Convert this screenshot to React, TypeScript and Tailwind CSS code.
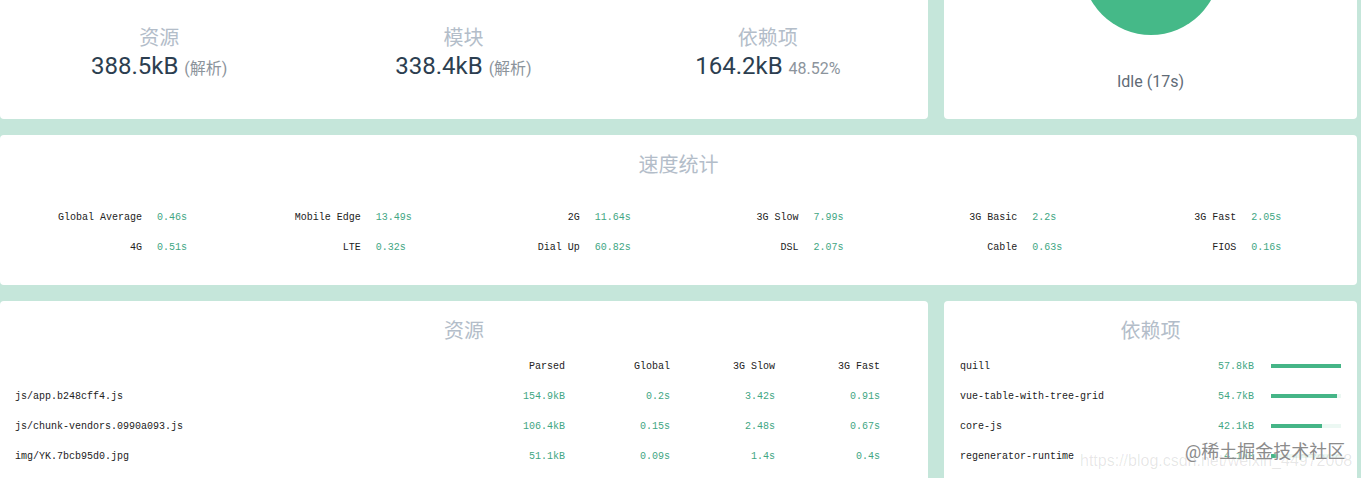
const speeds = [
  ["Global Average", "0.46s"],
  ["Mobile Edge", "13.49s"],
  ["2G", "11.64s"],
  ["3G Slow", "7.99s"],
  ["3G Basic", "2.2s"],
  ["3G Fast", "2.05s"],
  ["4G", "0.51s"],
  ["LTE", "0.32s"],
  ["Dial Up", "60.82s"],
  ["DSL", "2.07s"],
  ["Cable", "0.63s"],
  ["FIOS", "0.16s"],
];

const assets = [
  ["js/app.b248cff4.js", "154.9kB", "0.2s", "3.42s", "0.91s"],
  ["js/chunk-vendors.0990a093.js", "106.4kB", "0.15s", "2.48s", "0.67s"],
  ["img/YK.7bcb95d0.jpg", "51.1kB", "0.09s", "1.4s", "0.4s"],
];

const deps = [
  { name: "quill", size: "57.8kB", width: 70 },
  { name: "vue-table-with-tree-grid", size: "54.7kB", width: 66 },
  { name: "core-js", size: "42.1kB", width: 51 },
  { name: "regenerator-runtime", size: "4.1kB", width: 7 },
];

const sans = "font-['Roboto','Noto_Sans_CJK_SC',sans-serif]";
const mono = "font-['Liberation_Mono','Noto_Sans_CJK_SC',monospace] text-[10px]";

const Stat = ({ title, value, sub }: { title: string; value: string; sub: string }) => (
  <div className="flex-1 text-center">
    <div className="text-[20px] leading-[26px] text-[#b3bdc9]">{title}</div>
    <div className="text-[24px] leading-[30px] text-[#2c3e50]">
      {value} <span className="text-[16px] text-[#8c949c]">{sub}</span>
    </div>
  </div>
);

export default function App() {
  return (
    <div className={`${sans} h-[478px] overflow-hidden bg-[#c5e6da] pr-1 flex flex-col gap-4`}>
      <div className="flex gap-4 h-[119px] shrink-0">
        <div className="w-[928px] bg-white rounded-b flex pl-[7px] pr-[8px] pt-[25px]">
          <Stat title="资源" value="388.5kB" sub="(解析)" />
          <Stat title="模块" value="338.4kB" sub="(解析)" />
          <Stat title="依赖项" value="164.2kB" sub="48.52%" />
        </div>
        <div className="flex-1 bg-white rounded-b flex flex-col items-center">
          <svg width="138" height="35" viewBox="0 34 138 35">
            <circle cx="69" cy="0" r="69" fill="#45b988" />
          </svg>
          <div className="mt-[37px] text-[16px] leading-5 text-[#5f6b76]">Idle (17s)</div>
        </div>
      </div>

      <div className="h-[150px] shrink-0 bg-white rounded px-[22px] pt-[17px]">
        <div className="text-center text-[20px] leading-[26px] text-[#b3bdc9]">速度统计</div>
        <div className={`${mono} grid grid-cols-6 mt-[24px]`}>
          {speeds.map(([label, time]) => (
            <div key={label} className="flex h-[30px] items-center">
              <div className="w-[120px] text-right text-[#222]">{label}</div>
              <div className="ml-[15px] text-[#41a683]">{time}</div>
            </div>
          ))}
        </div>
      </div>

      <div className="flex gap-4 flex-1 min-h-0">
        <div className="w-[928px] bg-white rounded-t pt-[17px] pl-[15px] pr-[48px]">
          <div className="text-center text-[20px] leading-[26px] text-[#b3bdc9] -mr-[33px]">资源</div>
          <div className={`${mono} mt-[7px]`}>
            <div className="flex h-[30px] items-center text-[#222]">
              <div className="flex-1" />
              {["Parsed", "Global", "3G Slow", "3G Fast"].map((h) => (
                <div key={h} className="w-[105px] text-right">{h}</div>
              ))}
            </div>
            {assets.map(([name, ...cells]) => (
              <div key={name} className="flex h-[30px] items-center">
                <div className="flex-1 text-[#222]">{name}</div>
                {cells.map((c, i) => (
                  <div key={i} className="w-[105px] text-right text-[#41a683]">{c}</div>
                ))}
              </div>
            ))}
          </div>
        </div>
        <div className="flex-1 bg-white rounded-t pt-[17px] pl-4 pr-4 relative">
          <div className="text-center text-[20px] leading-[26px] text-[#b3bdc9]">依赖项</div>
          <div className={`${mono} mt-[7px]`}>
            {deps.map((d) => (
              <div key={d.name} className="flex h-[30px] items-center">
                <div className="flex-1 text-[#222]">{d.name}</div>
                <div className="text-[#41a683]">{d.size}</div>
                <div className="ml-[17px] w-[70px] h-[4px] bg-[#ecf8f3]">
                  <div className="h-full bg-[#45b587]" style={{ width: d.width }} />
                </div>
              </div>
            ))}
          </div>
          {/* watermarks baked into the screenshot */}
          <div className="absolute left-[136px] top-[150px] whitespace-nowrap text-[16px] leading-5 text-black/10 font-['Liberation_Sans',sans-serif]">
            https://blog.csdn.net/weixin_44972008
          </div>
          <div className="absolute left-[241px] top-[139px] whitespace-nowrap text-[18px] leading-6 text-[#8b8b8b] [text-shadow:0_0_2px_#fff]">
            @稀土掘金技术社区
          </div>
        </div>
      </div>
    </div>
  );
}
